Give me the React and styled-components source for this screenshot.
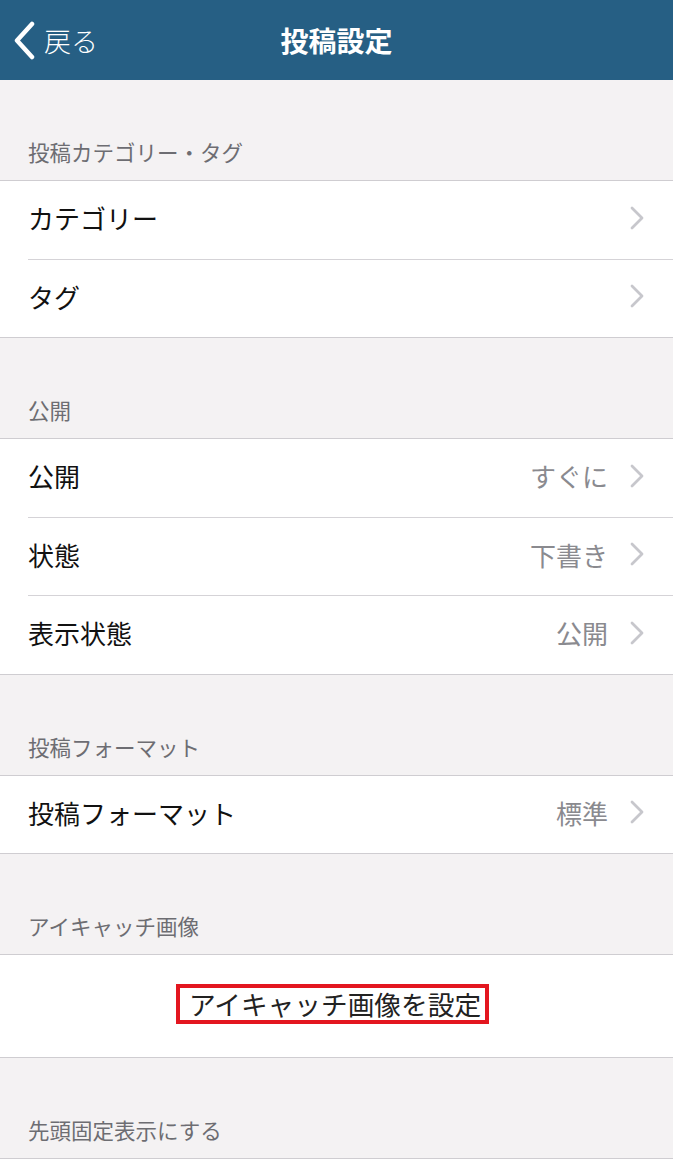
import React from "react";
import styled, { createGlobalStyle } from "styled-components";

const GlobalStyle = createGlobalStyle`
  html, body {
    margin: 0;
    padding: 0;
    background: #f4f2f3;
  }
  body {
    font-family: "Noto Sans CJK JP", "Noto Sans", sans-serif;
  }
  * {
    box-sizing: border-box;
  }
`;

const Page = styled.div`
  width: 673px;
  height: 1161px;
  overflow: hidden;
  background: #f4f2f3;
`;

const NavBar = styled.div`
  height: 80px;
  background: #265f84;
  display: grid;
  grid-template-columns: 1fr auto 1fr;
  align-items: center;
  color: #fff;
`;

const BackBtn = styled.div`
  display: flex;
  align-items: center;
  gap: 8px;
  padding-left: 12px;
  font-size: 27px;
  font-weight: 300;
  cursor: pointer;
`;

const NavTitle = styled.div`
  font-size: 28px;
  font-weight: bold;
`;

const SectionHeader = styled.div`
  height: 100px;
  padding: 59px 28px 0;
  font-size: 21.5px;
  line-height: 25px;
  color: #6d6d72;
`;

const Group = styled.div`
  background: #fff;
  border-top: 1px solid #cfcdd1;
  border-bottom: 1px solid #cfcdd1;
`;

const Row = styled.div`
  height: ${(p) => (p.$first ? "77.5px" : "78.5px")};
  display: flex;
  align-items: center;
  margin-left: 28px;
  padding-right: 29px;
  padding-bottom: 4px;
  border-top: ${(p) => (p.$first ? "none" : "1px solid #d5d3d7")};
`;

const Label = styled.div`
  flex: 1;
  font-size: 26px;
  color: #111;
`;

const Value = styled.div`
  font-size: 26px;
  color: #8a8a8f;
  margin-right: 22px;
`;

const ActionRow = styled.div`
  height: 101.5px;
  display: flex;
  align-items: center;
  justify-content: center;
  padding-bottom: 4px;
`;

const Highlight = styled.span`
  border: 4px solid #e3161f;
  padding: 1px 4px 1px 9px;
  font-size: 26.7px;
  line-height: 30px;
  color: #222;
  margin-right: 8px;
`;

const Chevron = () => (
  <svg width="14" height="24" viewBox="0 0 14 24">
    <path d="M2 2 L12 12 L2 22" fill="none" stroke="#c7c7cc" strokeWidth="2.8" strokeLinecap="round" strokeLinejoin="round" />
  </svg>
);

const BackChevron = () => (
  <svg width="24" height="40" viewBox="0 0 24 40">
    <path d="M20 4 L5 20.5 L20 37" fill="none" stroke="#fff" strokeWidth="4.5" strokeLinecap="round" strokeLinejoin="round" />
  </svg>
);

function Item({ label, value, first }) {
  return (
    <Row $first={first}>
      <Label>{label}</Label>
      {value && <Value>{value}</Value>}
      <Chevron />
    </Row>
  );
}

export default function App() {
  return (
    <Page>
      <GlobalStyle />
      <NavBar>
        <BackBtn>
          <BackChevron />
          <span>戻る</span>
        </BackBtn>
        <NavTitle>投稿設定</NavTitle>
        <div />
      </NavBar>

      <SectionHeader>投稿カテゴリー・タグ</SectionHeader>
      <Group>
        <Item label="カテゴリー" first />
        <Item label="タグ" />
      </Group>

      <SectionHeader>公開</SectionHeader>
      <Group>
        <Item label="公開" value="すぐに" first />
        <Item label="状態" value="下書き" />
        <Item label="表示状態" value="公開" />
      </Group>

      <SectionHeader>投稿フォーマット</SectionHeader>
      <Group>
        <Item label="投稿フォーマット" value="標準" first />
      </Group>

      <SectionHeader>アイキャッチ画像</SectionHeader>
      <Group>
        <ActionRow>
          <Highlight>アイキャッチ画像を設定</Highlight>
        </ActionRow>
      </Group>

      <SectionHeader>先頭固定表示にする</SectionHeader>
      <Group>
        <Row $first />
      </Group>
    </Page>
  );
}
